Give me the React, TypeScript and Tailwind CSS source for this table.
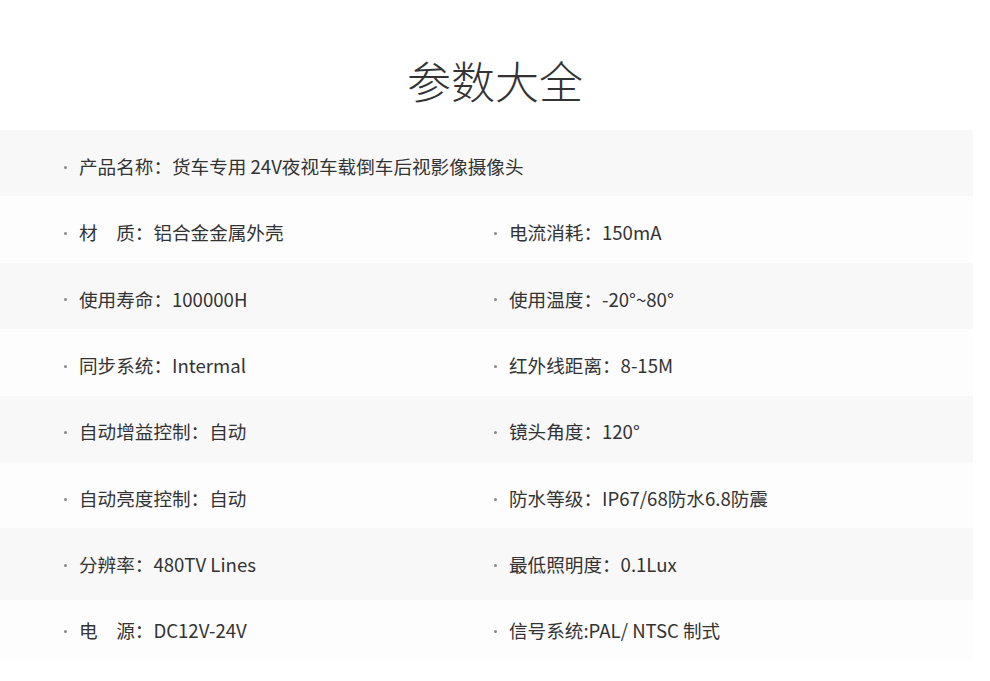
const rows: [string, string | null][] = [
  ['产品名称：货车专用 24V夜视车载倒车后视影像摄像头', null],
  ['材　质：铝合金金属外壳', '电流消耗：150mA'],
  ['使用寿命：100000H', '使用温度：-20°~80°'],
  ['同步系统：Intermal', '红外线距离：8-15M'],
  ['自动增益控制：自动', '镜头角度：120°'],
  ['自动亮度控制：自动', '防水等级：IP67/68防水6.8防震'],
  ['分辨率：480TV Lines', '最低照明度：0.1Lux'],
  ['电　源：DC12V-24V', '信号系统:PAL/ NTSC 制式'],
]

function Item({ text, wide }: { text: string; wide?: boolean }) {
  return (
    <div className={`flex items-center whitespace-nowrap ${wide ? 'col-span-2' : ''}`}>
      <span className="shrink-0 w-[3px] h-[3px] mt-[3px] bg-[#888] rounded-full ml-[64px] mr-[12px]" />
      <span>{text}</span>
    </div>
  )
}

export default function App() {
  return (
    <div
      className="w-[990px] h-[681px] bg-white overflow-hidden text-[#333]"
      style={{ fontFamily: '"Noto Sans CJK SC", "Noto Sans", sans-serif' }}
    >
      <h1 className="h-[130px] pt-[49px] text-center text-[44px] leading-[62px] font-light text-[#333]">
        参数大全
      </h1>
      <div className="w-[973px]">
        {rows.map(([a, b], i) => (
          <div
            key={i}
            className={`grid grid-cols-[430px_1fr] items-center text-[18.6px] font-normal ${
              i === 6 ? 'h-[72px]' : i === 7 ? 'h-[60px]' : 'h-[66.4px] pt-[5px]'
            } ${i % 2 === 0 ? 'bg-[#f8f8f8]' : 'bg-[#fdfdfd]'}`}
          >
            <Item text={a} wide={!b} />
            {b && <Item text={b} />}
          </div>
        ))}
      </div>
    </div>
  )
}
